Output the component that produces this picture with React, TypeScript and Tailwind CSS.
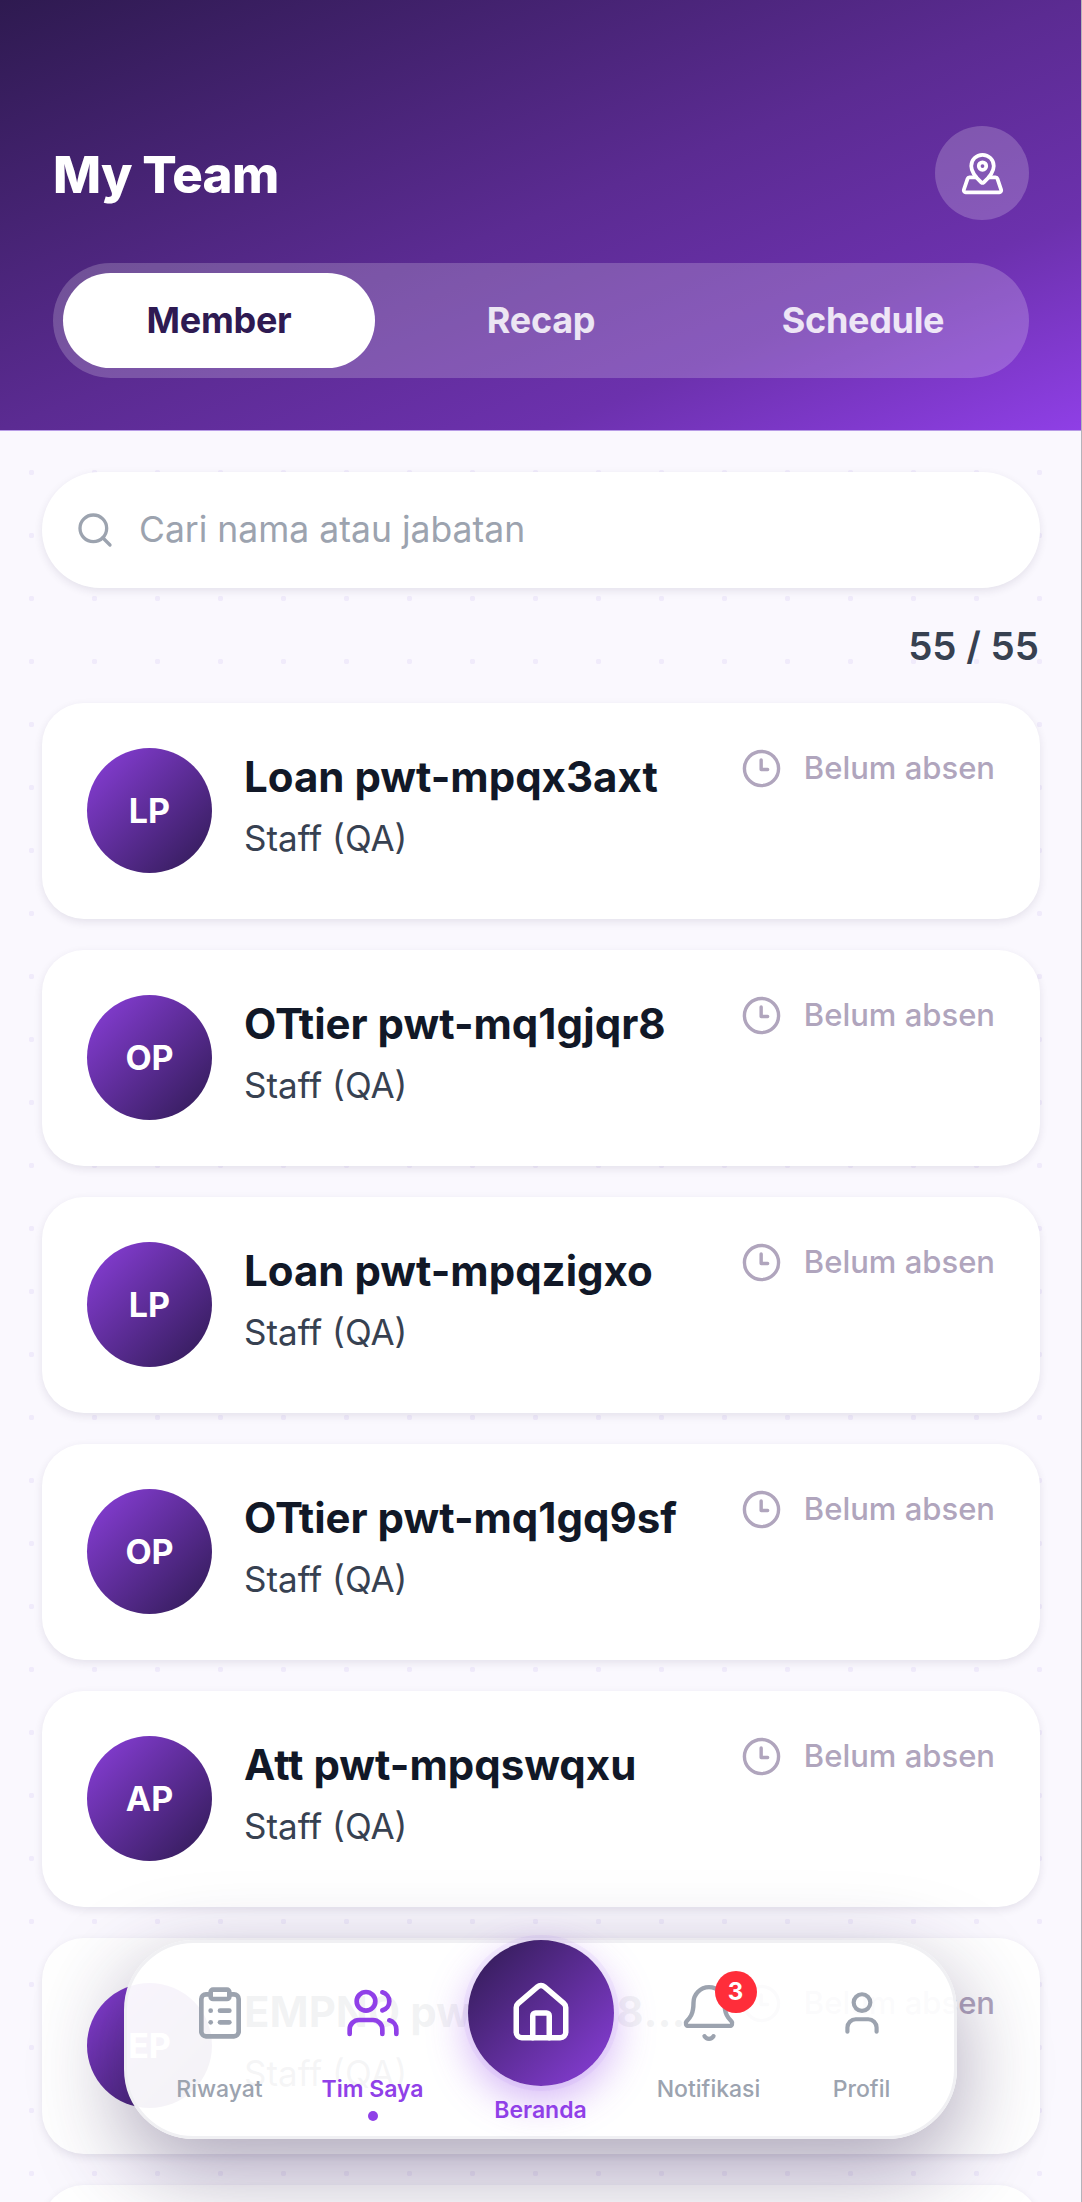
import React from "react";
import { MapPinned, Search, ClipboardList, Users, House, Bell, User } from "lucide-react";

const members = [
  { i: "LP", n: "Loan pwt-mpqx3axt" },
  { i: "OP", n: "OTtier pwt-mq1gjqr8" },
  { i: "LP", n: "Loan pwt-mpqzigxo" },
  { i: "OP", n: "OTtier pwt-mq1gq9sf" },
  { i: "AP", n: "Att pwt-mpqswqxu" },
  { i: "EP", n: "EMPNO pwt-mq138xyz" },
  { i: "LP", n: "Loan pwt-mpqy7bne" },
];

function ClockIcon() {
  return (
    <svg width="41" height="41" viewBox="0 0 24 24" fill="none" stroke="#b0a5bd" strokeWidth="2" strokeLinecap="round" strokeLinejoin="round" className="shrink-0">
      <circle cx="12" cy="12" r="10" />
      <path d="M11.8 7v5.6h3.8" />
    </svg>
  );
}

function MemberCard({ i, n }: { i: string; n: string }) {
  return (
    <div className="flex h-[216px] shrink-0 items-start rounded-[42px] bg-white p-[45px] shadow-[0_3px_9px_rgba(40,30,70,0.1)]">
      <div className="flex h-[125px] w-[125px] shrink-0 items-center justify-center rounded-full bg-[linear-gradient(135deg,#8b3fdc_0%,#2e1a52_100%)] text-[34px] font-bold leading-none text-white">
        {i}
      </div>
      <div className="ml-[32px] min-w-0 flex-1">
        <div className="mt-[4px] truncate text-[42px] font-bold leading-[50px] text-[#111827]">{n}</div>
        <div className="mt-[14px] text-[35px] leading-[44px] text-[#374151]">Staff (QA)</div>
      </div>
      <div className="ml-[40px] flex h-[40px] w-[254px] shrink-0 items-center justify-between">
        <ClockIcon />
        <span className="text-[31px] font-medium leading-[40px] text-[#b0a5bd]">Belum absen</span>
      </div>
    </div>
  );
}

function NavItem({ label, active, children }: { label: string; active?: boolean; children: React.ReactNode }) {
  return (
    <div className="flex w-[153px] flex-col items-center pt-[42px]">
      <div className="relative flex h-[56px] w-[56px] items-center justify-center">{children}</div>
      <div className={`mt-[34px] text-[23px] leading-[28px] ${active ? "font-semibold text-[#9040e8]" : "font-medium text-[#9ca3af]"}`}>{label}</div>
      {active ? <div className="mt-[8px] h-[10px] w-[10px] rounded-full bg-[#9040e8]" /> : null}
    </div>
  );
}

export default function App() {
  return (
    <div className="relative h-[2202px] w-[1082px] overflow-hidden font-['Inter',sans-serif]">
      <div className="h-full w-full border-r border-[#b5b3ba] bg-[#faf8fe] bg-[radial-gradient(circle,#f0ebfb_2.5px,transparent_3px)] bg-[length:63px_63px]">
        <header className="h-[431px] border-b border-[#b79be6] bg-[linear-gradient(to_bottom_right,#2e1a50_0%,#5b2b92_50%,#6c31ad_75%,#8f3fe6_100%)] pl-[53px] pr-[52px] pt-[126px]">
          <div className="flex h-[94px] items-center justify-between">
            <h1 className="pt-[2px] text-[51px] font-extrabold leading-none tracking-[-0.7px] text-white">My Team</h1>
            <div className="flex h-[94px] w-[94px] items-center justify-center rounded-full bg-white/20">
              <MapPinned size={45} color="#ffffff" strokeWidth={2} />
            </div>
          </div>
          <div className="mt-[43px] grid h-[115px] grid-cols-3 gap-[10px] rounded-full bg-white/20 p-[10px]">
            <div className="flex items-center justify-center rounded-full bg-white pb-[2px] text-[36px] font-bold tracking-[-0.3px] text-[#2e1a52]">Member</div>
            <div className="flex items-center justify-center rounded-full pb-[2px] text-[36px] font-bold tracking-[-0.3px] text-white/85">Recap</div>
            <div className="flex items-center justify-center rounded-full pb-[2px] text-[36px] font-bold tracking-[-0.3px] text-white/85">Schedule</div>
          </div>
        </header>
        <main className="pl-[42px] pr-[41px] pt-[41px]">
          <div className="flex h-[116px] items-center rounded-full bg-white pl-[33px] shadow-[0_3px_9px_rgba(40,30,70,0.1)]">
            <Search size={40} color="#9ca3af" strokeWidth={2} className="shrink-0" />
            <span className="ml-[24px] text-[35.5px] text-[#9ca3af]">Cari nama atau jabatan</span>
          </div>
          <div className="mt-[38px] pr-[1px] text-right text-[38.5px] font-semibold leading-[40px] text-[#374151]">55 / 55</div>
          <div className="mt-[37px] flex flex-col gap-[31px]">
            {members.map((m, idx) => (
              <MemberCard key={idx} i={m.i} n={m.n} />
            ))}
          </div>
        </main>
      </div>

      <nav className="absolute left-[124px] top-[1940px] flex h-[199px] w-[833px] justify-center rounded-[70px] border-[3px] border-[#f0f0f3] bg-white/95 shadow-[0_30px_90px_rgba(45,27,78,0.4)]">
        <NavItem label="Riwayat">
          <ClipboardList size={56} color="#9ca3af" strokeWidth={2} />
        </NavItem>
        <NavItem label="Tim Saya" active>
          <Users size={56} color="#9040e8" strokeWidth={2} />
        </NavItem>
        <div className="-mt-[3px] flex w-[183px] flex-col items-center">
          <div className="flex h-[146px] w-[146px] items-center justify-center rounded-full bg-[linear-gradient(135deg,#2e1a50_0%,#8b3fdc_100%)] shadow-[0_0_0_5px_rgba(144,64,232,0.06),0_14px_40px_rgba(144,64,232,0.4)]">
            <House size={66} color="#ffffff" strokeWidth={2} />
          </div>
          <div className="mt-[10px] text-[23px] font-semibold leading-[28px] text-[#9040e8]">Beranda</div>
        </div>
        <NavItem label="Notifikasi">
          <Bell size={62} color="#9ca3af" strokeWidth={1.7} className="shrink-0" />
          <span className="absolute left-[34px] top-[-14px] flex h-[42px] w-[42px] items-center justify-center rounded-full bg-[#ff2d3a] text-[24px] font-bold leading-none text-white">3</span>
        </NavItem>
        <NavItem label="Profil">
          <User size={50} color="#9ca3af" strokeWidth={2} />
        </NavItem>
      </nav>
    </div>
  );
}
